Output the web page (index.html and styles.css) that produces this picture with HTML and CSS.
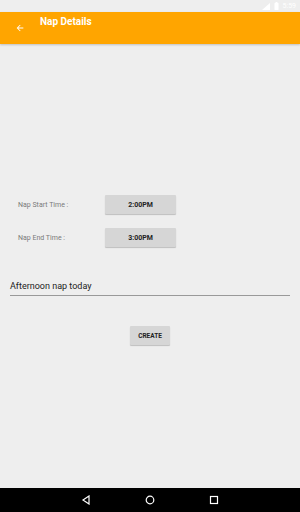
FILE: index.html
```html
<!DOCTYPE html>
<html>
<head>
  <link rel="stylesheet" href="styles.css">
</head>
<body>
  <div class="screen">
    <!-- Status bar -->
    <div class="status">
      <svg width="8" height="7" viewBox="0 0 8 7"><path d="M0 7 L8 0 L8 7 Z" fill="#fff"/></svg>
      <svg width="5" height="8" viewBox="0 0 5 8"><rect x="0.5" y="1" width="4" height="7" rx="0.5" fill="#fff"/><rect x="1.5" y="0" width="2" height="1" fill="#fff"/></svg>
      <span class="clock">5:59</span>
    </div>

    <!-- Toolbar -->
    <div class="toolbar">
      <svg class="back" width="10" height="10" viewBox="0 0 24 24"><path d="M20 11H7.83l5.59-5.59L12 4l-8 8 8 8 1.41-1.41L7.83 13H20v-2z" fill="#fff"/></svg>
      <span class="title">Nap Details</span>
    </div>

    <div class="content">
      <div class="row">
        <span class="label">Nap Start Time :</span>
        <button class="btn time">2:00PM</button>
      </div>
      <div class="row">
        <span class="label">Nap End Time :</span>
        <button class="btn time">3:00PM</button>
      </div>

      <div class="field">Afternoon nap today</div>

      <div class="actions">
        <button class="btn create">CREATE</button>
      </div>
    </div>

    <!-- Navigation bar -->
    <div class="navbar">
      <svg width="10" height="10" viewBox="0 0 10 10"><path d="M8 1 L2 5 L8 9 Z" fill="none" stroke="#fff" stroke-width="1.2"/></svg>
      <svg width="10" height="10" viewBox="0 0 10 10"><circle cx="5" cy="5" r="3.8" fill="none" stroke="#fff" stroke-width="1.2"/></svg>
      <svg width="10" height="10" viewBox="0 0 10 10"><rect x="1.5" y="1.5" width="7" height="7" fill="none" stroke="#fff" stroke-width="1.2"/></svg>
    </div>
  </div>
</body>
</html>
```

FILE: styles.css
```css
* {
  margin: 0;
  padding: 0;
  box-sizing: border-box;
}

body {
  font-family: Roboto, "Liberation Sans", sans-serif;
  background: #eeeeee;
}

.screen {
  width: 300px;
  height: 512px;
  display: flex;
  flex-direction: column;
}

/* Status bar */
.status {
  height: 12px;
  display: flex;
  justify-content: flex-end;
  align-items: center;
  gap: 4px;
  padding-right: 4px;
  background: #eeeeee;
}

.clock {
  color: #fff;
  font-size: 7px;
}

/* Toolbar */
.toolbar {
  height: 32px;
  background: #ffa500;
  display: flex;
  align-items: flex-start;
  box-shadow: 0 1px 2px rgba(0,0,0,0.2);
}

.back {
  margin: 11px 0 0 15px;
}

.title {
  color: #fff;
  font-size: 10px;
  font-weight: bold;
  margin: 4px 0 0 15px;
}

/* Content */
.content {
  flex: 1;
  padding: 151px 10px 0;
}

.row {
  display: flex;
  align-items: center;
  height: 19px;
  margin-bottom: 14px;
}

.label {
  width: 95px;
  padding-left: 8px;
  font-size: 7px;
  color: #7a7a7a;
}

.btn {
  background: #d6d6d6;
  border: none;
  border-radius: 1px;
  box-shadow: 0 1px 1px rgba(0,0,0,0.2);
  font-family: Roboto, "Liberation Sans", sans-serif;
  font-size: 7px;
  font-weight: bold;
  color: #222;
}

.time {
  width: 71px;
  height: 19px;
}

.field {
  margin-top: 34px;
  font-size: 9px;
  color: #222;
  padding-bottom: 4px;
  border-bottom: 1px solid #999;
}

.actions {
  display: flex;
  justify-content: center;
  margin-top: 30px;
}

.create {
  width: 40px;
  height: 19px;
  font-size: 6.5px;
}

/* Navigation bar */
.navbar {
  height: 24px;
  background: #000;
  display: flex;
  justify-content: center;
  align-items: center;
  gap: 54px;
}
```
